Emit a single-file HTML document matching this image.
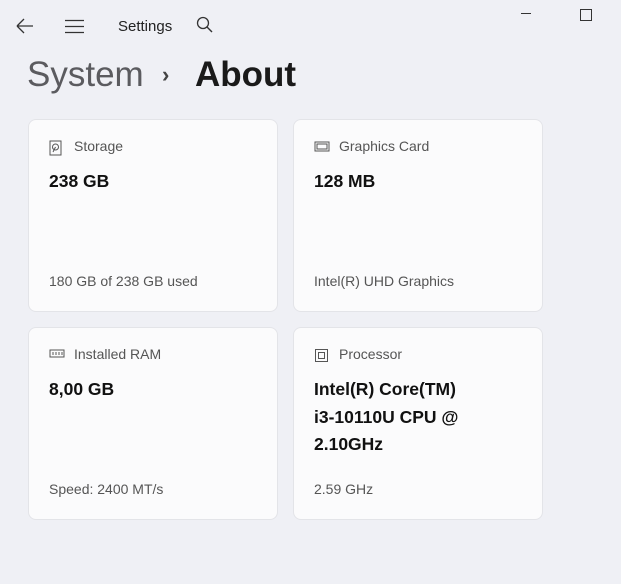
<!DOCTYPE html>
<html><head><style>
body{margin:0;width:621px;height:584px;background:#eff0f5;font-family:"Liberation Sans",sans-serif;position:relative;overflow:hidden;color:#1b1b1b}
.a{position:absolute}
.card{position:absolute;width:250px;height:193px;background:#fbfbfc;border:1px solid #e3e4e8;border-radius:8px;box-sizing:border-box}
.lbl{position:absolute;left:45px;top:18px;font-size:14px;color:#555}
.ic{position:absolute;left:20px;top:20px}
.val{position:absolute;left:20px;top:48px;font-size:17.5px;font-weight:bold;line-height:27.5px;color:#111}
.sub{position:absolute;left:20px;top:153px;font-size:14px;color:#555}
</style></head><body>
<svg class="a" style="left:16px;top:18px" width="18" height="16"><path d="M1 8H17M1 8L8 1M1 8L8 15" stroke="#333" stroke-width="1.3" fill="none"/></svg>
<svg class="a" style="left:65px;top:19px" width="20" height="16"><path d="M0 1.5H19M0 7.5H19M0 13.5H19" stroke="#333" stroke-width="1.3"/></svg>
<div class="a" style="left:118px;top:18px;font-size:15px;color:#222">Settings</div>
<svg class="a" style="left:196px;top:16px" width="18" height="18"><circle cx="7" cy="7" r="5.5" stroke="#333" stroke-width="1.3" fill="none"/><path d="M11 11L16 16" stroke="#333" stroke-width="1.4"/></svg>
<div class="a" style="left:521px;top:13px;width:10px;height:1px;background:#333"></div>
<div class="a" style="left:580px;top:9px;width:10px;height:10px;border:1.3px solid #333"></div>
<div class="a" style="left:27px;top:55px;font-size:35px;color:#5b5b5f">System</div>
<div class="a" style="left:162px;top:62px;font-size:22px;color:#444;font-weight:bold">›</div>
<div class="a" style="left:195px;top:55px;font-size:35px;color:#1a1a1a;font-weight:bold">About</div>

<div class="card" style="left:28px;top:119px">
<svg class="ic" width="14" height="16"><rect x="1" y="1" width="11" height="14" stroke="#555" fill="none"/><circle cx="6.5" cy="7" r="3" stroke="#555" fill="none"/><path d="M6.5 7L4 12" stroke="#555"/></svg>
<div class="lbl">Storage</div><div class="val">238 GB</div><div class="sub">180 GB of 238 GB used</div></div>

<div class="card" style="left:293px;top:119px">
<svg class="ic" width="16" height="14"><rect x="1" y="2" width="14" height="9" stroke="#555" fill="none"/><rect x="3" y="4" width="10" height="5" stroke="#555" fill="none"/></svg>
<div class="lbl">Graphics Card</div><div class="val">128 MB</div><div class="sub">Intel(R) UHD Graphics</div></div>

<div class="card" style="left:28px;top:327px">
<svg class="ic" width="16" height="12"><rect x="1" y="2" width="14" height="7" stroke="#555" fill="none"/><path d="M4 4V7M7 4V7M10 4V7M13 4V7" stroke="#555"/></svg>
<div class="lbl">Installed RAM</div><div class="val">8,00 GB</div><div class="sub">Speed: 2400 MT/s</div></div>

<div class="card" style="left:293px;top:327px">
<svg class="ic" width="15" height="15"><rect x="1.5" y="1.5" width="12" height="12" stroke="#555" fill="none"/><rect x="4.5" y="4.5" width="6" height="6" stroke="#555" fill="none"/></svg>
<div class="lbl">Processor</div><div class="val">Intel(R) Core(TM)<br>i3-10110U CPU @<br>2.10GHz</div><div class="sub">2.59 GHz</div></div>
</body></html>
